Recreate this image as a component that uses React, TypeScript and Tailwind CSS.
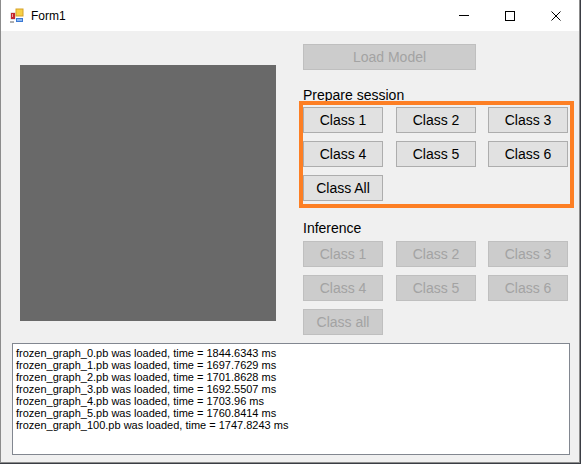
import type { ReactNode } from "react";

const UI_FONT = "font-['Liberation_Sans',Arial,sans-serif]";

function FormButton({ children, disabled = false, wide = false }: { children: ReactNode; disabled?: boolean; wide?: boolean }) {
  const tone = disabled
    ? "bg-[#cccccc] border-[#bfbfbf] text-[#a3a3a3]"
    : "bg-[#e1e1e1] border-[#adadad] text-black";
  return (
    <div
      className={`${wide ? "w-[173px]" : "w-[80px]"} h-[26px] border ${tone} flex items-center justify-center text-[14px] leading-none select-none`}
    >
      {children}
    </div>
  );
}

function ButtonGrid({ labels, disabled = false }: { labels: string[]; disabled?: boolean }) {
  return (
    <div className="grid grid-cols-[80px_80px_80px] gap-y-[8px] gap-x-[13px]">
      {labels.map((l, i) => (
        <div key={l} className={i % 3 === 2 ? "-ml-px" : ""}>
          <FormButton disabled={disabled}>{l}</FormButton>
        </div>
      ))}
    </div>
  );
}

function AppIcon() {
  return (
    <svg width="14" height="15" viewBox="0 0 14 15">
      <rect x="0" y="0" width="14" height="15" fill="#ffffff" />
      <rect x="0.5" y="4.5" width="5" height="7" fill="#c8c8c8" />
      <rect x="1" y="5" width="4" height="6" fill="#c4262e" />
      <rect x="2" y="6" width="1" height="3" fill="#f0a0a0" />
      <rect x="5.5" y="0.5" width="8" height="8" fill="#d6a228" />
      <rect x="6.5" y="1.5" width="6" height="6" fill="#f7d046" />
      <rect x="6" y="10" width="7" height="4" fill="#3a78d4" />
      <rect x="7" y="11" width="5" height="2" fill="#8db8f0" />
      <rect x="0" y="13" width="4" height="2" fill="#b0b0b0" />
    </svg>
  );
}

function TitleBar() {
  return (
    <div className="h-[31px] bg-white flex items-center">
      <div className="ml-[9px] mt-[-1px]">
        <AppIcon />
      </div>
      <span className="ml-[7px] text-[12px] text-black">Form1</span>
      <div className="ml-auto flex h-full">
        <div className="w-[46px] h-full flex items-center justify-center">
          <div className="w-[10px] h-px bg-black" />
        </div>
        <div className="w-[46px] h-full flex items-center justify-center">
          <div className="w-[10px] h-[10px] border border-black" />
        </div>
        <div className="w-[46px] h-full flex items-center justify-center">
          <svg width="10" height="10" viewBox="0 0 10 10">
            <path d="M0.5 0.5 L9.5 9.5 M9.5 0.5 L0.5 9.5" stroke="#000" strokeWidth="1" />
          </svg>
        </div>
      </div>
    </div>
  );
}

const logLines = [
  "frozen_graph_0.pb was loaded, time = 1844.6343 ms",
  "frozen_graph_1.pb was loaded, time = 1697.7629 ms",
  "frozen_graph_2.pb was loaded, time = 1701.8628 ms",
  "frozen_graph_3.pb was loaded, time = 1692.5507 ms",
  "frozen_graph_4.pb was loaded, time = 1703.96 ms",
  "frozen_graph_5.pb was loaded, time = 1760.8414 ms",
  "frozen_graph_100.pb was loaded, time = 1747.8243 ms",
];

export default function App() {
  return (
    <div className={`w-[581px] h-[464px] bg-[#3a3d44] ${UI_FONT}`}>
      <div className="w-[580px] h-[463px] border-x border-b border-[#8c8c8c] flex flex-col">
        <TitleBar />
        <div className="flex-1 bg-[#f0f0f0] relative">
          <div className="flex pt-[13px]">
            {/* picture box */}
            <div className="ml-[19px] mt-[21px] w-[256px] h-[256px] bg-[#696969]" />

            <div className="ml-[27px] flex flex-col">
              <FormButton disabled wide>Load Model</FormButton>
              <div className="mt-[17px] h-[16px] text-[14px] leading-[16px]">Prepare session</div>
              <div className="mt-[4px]">
                <ButtonGrid labels={["Class 1", "Class 2", "Class 3", "Class 4", "Class 5", "Class 6", "Class All"]} />
              </div>
              <div className="mt-[19px] h-[16px] text-[14px] leading-[16px]">Inference</div>
              <div className="mt-[5px]">
                <ButtonGrid disabled labels={["Class 1", "Class 2", "Class 3", "Class 4", "Class 5", "Class 6", "Class all"]} />
              </div>
            </div>
          </div>

          {/* log output */}
          <div className="ml-[11px] mt-[8px] w-[558px] h-[112px] bg-white border border-[#828790] pl-[3px] pt-[3px]">
            {logLines.map((l) => (
              <div key={l} className="text-[11px] leading-[12px] text-black whitespace-pre">
                {l}
              </div>
            ))}
          </div>

          {/* highlight frame around the session buttons */}
          <div className="absolute left-[298px] top-[70px] w-[275px] h-[107px] border-[4px] border-[#fd7f24] pointer-events-none" />
        </div>
      </div>
    </div>
  );
}
